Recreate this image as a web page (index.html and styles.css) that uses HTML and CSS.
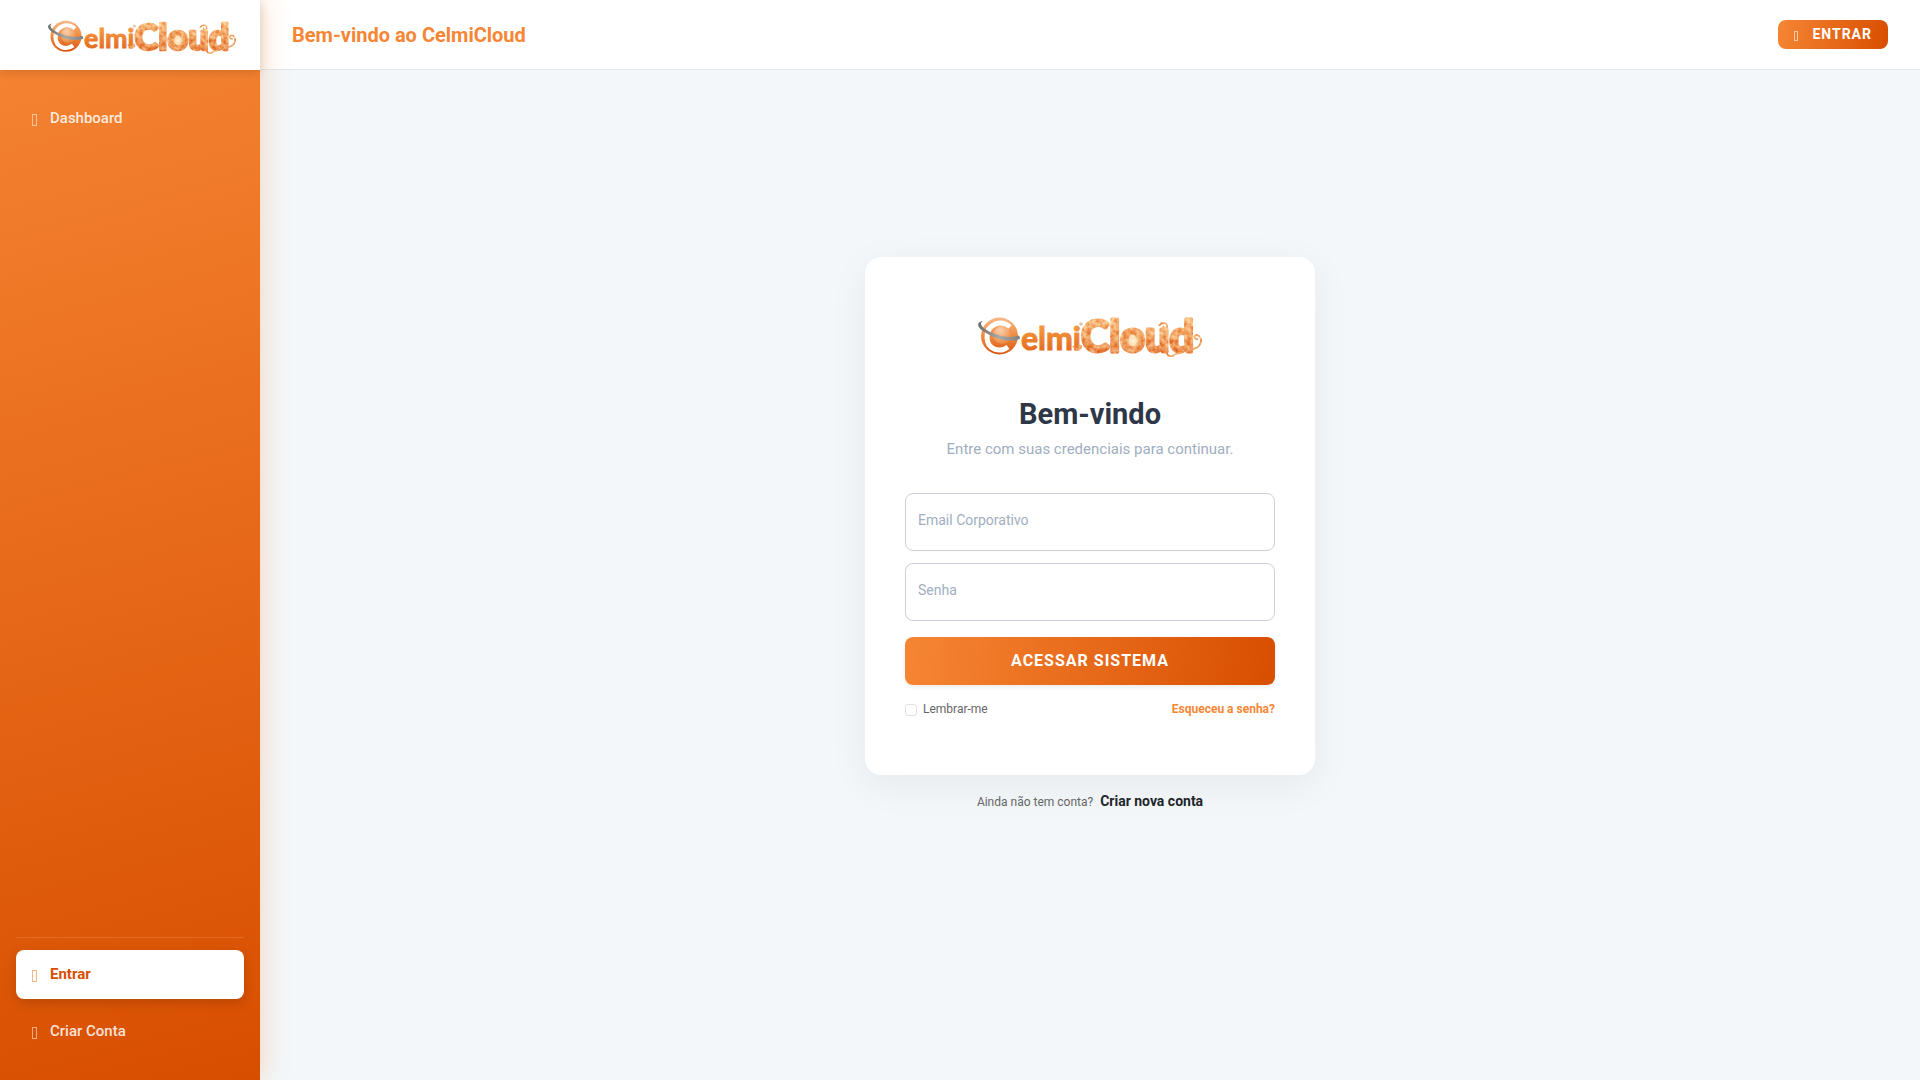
FILE: index.html
```html
<!DOCTYPE html>
<html lang="pt-BR">
<head>
    <meta charset="UTF-8">
    <meta name="viewport" content="width=device-width, initial-scale=1.0">
    <title>Entrar - CelmiCloud</title>
    <link rel="stylesheet" href="styles.css">
</head>
<body>
    <!-- Logo, shared by the sidebar and the login card -->
    <svg class="defs" width="0" height="0" aria-hidden="true">
        <defs>
            <linearGradient id="globe" x1="0" y1="0" x2="0" y2="1">
                <stop offset="0" stop-color="#f7b98c"/>
                <stop offset="0.5" stop-color="#f08a3c"/>
                <stop offset="1" stop-color="#d9530f"/>
            </linearGradient>
            <radialGradient id="core" cx="0.4" cy="0.25" r="0.8">
                <stop offset="0" stop-color="#fbd0ae"/>
                <stop offset="0.6" stop-color="#f2a468"/>
                <stop offset="1" stop-color="#e98236"/>
            </radialGradient>
            <linearGradient id="ring" x1="0" y1="0" x2="1" y2="0">
                <stop offset="0" stop-color="#6b6b6b"/>
                <stop offset="0.5" stop-color="#a9a9a6"/>
                <stop offset="1" stop-color="#7f8180"/>
            </linearGradient>
            <linearGradient id="word" x1="0" y1="0" x2="0" y2="1">
                <stop offset="0.2" stop-color="#f59a3e"/>
                <stop offset="1" stop-color="#e0601a"/>
            </linearGradient>
            <linearGradient id="clouds" x1="0" y1="0" x2="0" y2="1">
                <stop offset="0.2" stop-color="#f9c27c"/>
                <stop offset="0.5" stop-color="#f2a45e"/>
                <stop offset="0.85" stop-color="#e2702c"/>
            </linearGradient>
            <radialGradient id="glow">
                <stop offset="0" stop-color="#fff6e2"/>
                <stop offset="0.5" stop-color="#fde2b4"/>
                <stop offset="1" stop-color="#fbd59c" stop-opacity="0"/>
            </radialGradient>
            <!-- mottled cloud texture laid over the letters -->
            <filter id="billow" color-interpolation-filters="sRGB">
                <feTurbulence type="fractalNoise" baseFrequency="0.22" numOctaves="2" seed="4"/>
                <feColorMatrix values="0.3 0 0 0 0.8  1.2 0 0 0 0.06  1.4 0 0 0 -0.26  0 0 0 0 0.5"/>
                <feComposite operator="atop" in2="SourceGraphic"/>
            </filter>
            <symbol id="logo" viewBox="0 0 224 40">
                <circle cx="21.5" cy="19" r="18.5" fill="url(#globe)"/>
                <path d="M32 10 C23 2 9 7 9 20 C9 33 22 36 30 30" fill="none" stroke="#fff" stroke-width="5"/>
                <circle cx="24" cy="18" r="9" fill="url(#core)"/>
                <path d="M5 4 C-2 5 -1 10 5 14 C16 22 31 26 42 22 C42 18 40 18 39 19 C28 22 15 17 7 12 C2 8 2 6 5 4Z" fill="url(#ring)"/>
                <text class="logo-elmi" x="43" y="33" fill="url(#word)" stroke="url(#word)">elmi</text>
                <circle cx="103" cy="7" r="1.2" fill="none" stroke="#a67c52" stroke-width="0.6"/>
                <g filter="url(#billow)">
                    <text class="logo-cloud" x="103" y="35" fill="url(#clouds)" stroke="url(#clouds)">Cloud</text>
                    <g fill="none" stroke="#ee9a50" stroke-width="1.8">
                        <path d="M95 29 C99 34 104 32 103 29 C101 27 99 30 102 32"/>
                        <path d="M181 9 C184 4 190 6 189 10 C187 13 184 11 186 9"/>
                        <path d="M213 32 C224 32 226 20 219 18 C215 18 216 23 220 22"/>
                        <path d="M190 34 C187 38 193 41 196 38 C198 35 204 38 207 33"/>
                    </g>
                </g>
                <circle cx="155" cy="24" r="7" fill="url(#glow)"/>
            </symbol>
        </defs>
    </svg>

    <aside class="sidebar">
        <a class="sidebar-brand" href="#" aria-label="CelmiCloud">
            <svg class="brand-logo"><use href="#logo"/></svg>
        </a>
        <nav class="sidebar-nav">
            <a class="nav-link" href="#"><span class="icon"></span>Dashboard</a>
            <div class="sidebar-bottom">
                <a class="nav-link active" href="#"><span class="icon"></span>Entrar</a>
                <a class="nav-link" href="#"><span class="icon"></span>Criar Conta</a>
            </div>
        </nav>
    </aside>

    <div class="page">
        <header class="topbar">
            <h1>Bem-vindo ao CelmiCloud</h1>
            <button type="button" class="btn btn-small"><span class="icon"></span>ENTRAR</button>
        </header>

        <main class="content">
            <div class="login-card">
                <svg class="login-logo" role="img" aria-label="CelmiCloud"><use href="#logo"/></svg>
                <h2>Bem-vindo</h2>
                <p class="subtitle">Entre com suas credenciais para continuar.</p>

                <form>
                    <input type="email" id="email" placeholder="Email Corporativo" aria-label="Email Corporativo">
                    <input type="password" id="senha" placeholder="Senha" aria-label="Senha">
                    <button type="submit" class="btn btn-submit">ACESSAR SISTEMA</button>
                    <div class="form-options">
                        <label for="lembrar"><input type="checkbox" id="lembrar">Lembrar-me</label>
                        <a href="#">Esqueceu a senha?</a>
                    </div>
                </form>
            </div>
            <p class="register">Ainda não tem conta? <a href="#">Criar nova conta</a></p>
        </main>
    </div>
</body>
</html>
```
FILE: styles.css
```css
* {
    box-sizing: border-box;
}
body {
    margin: 0;
    min-height: 100vh;
    display: flex;
    background: #f3f7fa;
    color: #212529;
    font-family: Roboto, "Liberation Sans", sans-serif;
    font-size: 15px;
}
h1, h2, p {
    margin: 0;
}
a {
    text-decoration: none;
}
.defs {
    position: absolute;
}
.logo-elmi {
    font-family: Lato, sans-serif;
    font-weight: 700;
    font-size: 32px;
    stroke-width: 1px;
}
.logo-cloud {
    font-family: Lato, sans-serif;
    font-weight: 900;
    font-size: 43px;
    stroke-width: 3px;
    stroke-linejoin: round;
}
.icon {
    flex: none;
    width: 5px;
    height: 12px;
    border: 1px solid currentColor;
    opacity: 0.6;
}

/* Sidebar */
.sidebar {
    width: 260px;
    flex: none;
    display: flex;
    flex-direction: column;
    background: linear-gradient(165deg, #f68634 0%, #d84e00 100%);
    box-shadow: 4px 0 24px rgba(246, 134, 52, 0.25);
    z-index: 2;
}
.sidebar-brand {
    height: 70px;
    display: flex;
    align-items: center;
    justify-content: flex-end;
    padding: 4px 24px 0 0;
    background: #fff;
    box-shadow: 0 2px 10px rgba(0, 0, 0, 0.15);
}
.brand-logo {
    width: 188px;
    height: 34px;
}
.sidebar-nav {
    flex: 1;
    display: flex;
    flex-direction: column;
    padding: 24px 16px;
}
.nav-link {
    display: flex;
    align-items: center;
    gap: 13px;
    height: 49px;
    padding: 0 16px 2px;
    border-radius: 8px;
    color: rgba(255, 255, 255, 0.85);
    font-weight: 500;
    line-height: 18px;
}
.nav-link .icon {
    margin-top: 4px;
}
.nav-link.active {
    background: #fff;
    color: #d84e00;
    font-weight: 700;
    box-shadow: 0 4px 12px rgba(0, 0, 0, 0.15);
}
.nav-link.active .icon {
    color: #f68634;
}
.sidebar-bottom {
    display: flex;
    flex-direction: column;
    gap: 8px;
    margin-top: auto;
    padding-top: 12px;
    border-top: 1px solid rgba(255, 255, 255, 0.12);
}

/* Top bar */
.page {
    flex: 1;
    display: flex;
    flex-direction: column;
}
.topbar {
    height: 70px;
    display: flex;
    align-items: center;
    justify-content: space-between;
    padding: 0 32px;
    background: #fff;
    border-bottom: 1px solid #e2e8f0;
}
.topbar h1 {
    color: #f68634;
    font-size: 20px;
    font-weight: 700;
}
.btn {
    border: 0;
    border-radius: 8px;
    background: linear-gradient(100deg, #f68634 0%, #d84e00 100%);
    color: #fff;
    font-family: inherit;
    font-weight: 700;
    letter-spacing: 1px;
    padding: 0 16px 2px;
    cursor: pointer;
}
.btn-small {
    display: flex;
    align-items: center;
    gap: 14px;
    height: 29px;
    font-size: 14px;
}
.btn-small .icon {
    width: 4px;
    height: 10px;
    margin-top: 5px;
}

/* Login */
.content {
    flex: 1;
    display: flex;
    flex-direction: column;
    align-items: center;
    justify-content: center;
    padding: 24px 24px 105px;
}
.login-card {
    width: 100%;
    max-width: 450px;
    padding: 60px 40px 57px;
    display: flex;
    flex-direction: column;
    align-items: center;
    background: #fff;
    border-radius: 16px;
    box-shadow: 0 10px 40px rgba(0, 0, 0, 0.06);
}
.login-logo {
    width: 224px;
    height: 40px;
}
.login-card h2 {
    margin-top: 39px;
    color: #2d3748;
    font-size: 29px;
    line-height: 36px;
}
.subtitle {
    margin-top: 7px;
    color: #a0aec0;
    line-height: 20px;
}
form {
    width: 100%;
    margin-top: 34px;
}
input[type="email"], input[type="password"] {
    display: block;
    width: 100%;
    height: 58px;
    margin-bottom: 12px;
    padding: 0 12px 4px;
    border: 1px solid #cbd0dc;
    border-radius: 8px;
    background: #fff;
    color: #2d3748;
    font-family: inherit;
    font-size: 14px;
}
input::placeholder {
    color: #a0aec0;
}
.btn-submit {
    width: 100%;
    height: 48px;
    margin-top: 4px;
    font-size: 16px;
    box-shadow: 0 2px 4px rgba(0, 0, 0, 0.08);
}
.form-options {
    display: flex;
    align-items: center;
    justify-content: space-between;
    margin-top: 15px;
    font-size: 12px;
    line-height: 18px;
}
.form-options label {
    display: flex;
    align-items: center;
    gap: 6px;
    color: #666;
}
.form-options input {
    appearance: none;
    width: 12px;
    height: 12px;
    margin: 2px 0 0;
    border: 1px solid #dee2e6;
    border-radius: 3px;
    background: #fff;
}
.form-options a {
    color: #f68634;
    font-weight: 700;
}
.register {
    margin-top: 16px;
    color: #666;
    font-size: 12px;
    line-height: 20px;
}
.register a {
    margin-left: 4px;
    color: #212529;
    font-size: 14px;
    font-weight: 700;
}
```
